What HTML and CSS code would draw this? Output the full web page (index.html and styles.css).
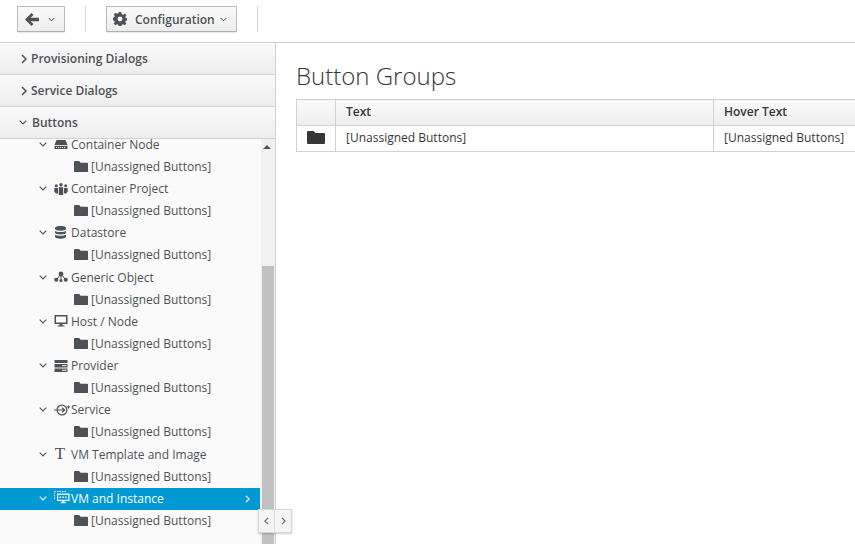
FILE: index.html
```html
<!DOCTYPE html>
<html lang="en">
<head>
  <meta charset="UTF-8" />
  <meta name="viewport" content="width=device-width, initial-scale=1" />
  <title>Button Groups</title>
  <link rel="stylesheet" href="styles.css">
</head>
<body>

  <svg class="defs" width="0" height="0">
    <symbol id="folder" viewBox="0 0 16 13" preserveAspectRatio="none"><path d="M0 1.200Q0 0 1.200 0H6L7.500 2H15Q16 2 16 3V12Q16 13 15 13H1Q0 13 0 12Z"/></symbol>
    <symbol id="down" viewBox="0 0 8 5"><path d="M.7.7 4 4 7.300.7" fill="none" stroke="currentColor" stroke-width="1.100"/></symbol>
    <symbol id="right" viewBox="0 0 6 10"><path d="M1 1 5 5 1 9" fill="none" stroke="currentColor" stroke-width="1.500"/></symbol>
  </svg>

  <div class="toolbar">
    <button class="tool-btn back-btn">
      <svg class="back-icon" viewBox="0 0 14 13"><path d="M6.500 0 8.500 2 5.500 4.700H14V8.300H5.500L8.500 11 6.500 13 0 6.500Z"/></svg>
      <svg class="caret"><use href="#down"/></svg>
    </button>
    <span class="tool-sep"></span>
    <button class="tool-btn config-btn">
      <svg class="gear" viewBox="0 0 14 14"><path fill-rule="evenodd" d="M5.700 0H8.300L8.700 2 10.300 2.700 12 1.600 13.400 3.400 12.300 4.900 12.800 6 14 6.300V8.300L12.800 8.700 12.300 10 13.300 11.600 11.700 13.200 10.200 12.200 8.800 12.800 8.300 14H5.700L5.300 12.700 3.900 12.200 2.400 13.300.7 11.600 1.800 10 1.200 8.700 0 8.300V5.700L1.200 5.300 1.800 3.900.8 2.400 2.400.8 3.900 1.800 5.300 1.200ZM7 4.600A2.400 2.400 0 1 0 7 9.400 2.400 2.400 0 1 0 7 4.600Z"/></svg>
      <span>Configuration</span>
      <svg class="caret"><use href="#down"/></svg>
    </button>
    <span class="tool-sep"></span>
  </div>

  <div class="main">
    <div class="sidebar">
      <div class="acc-head"><svg class="acc-right"><use href="#right"/></svg>Provisioning Dialogs</div>
      <div class="acc-head"><svg class="acc-right"><use href="#right"/></svg>Service Dialogs</div>
      <div class="acc-head"><svg class="acc-down"><use href="#down"/></svg>Buttons</div>

      <div class="tree-wrap">
        <div class="tree">
          <div class="node">
            <svg class="toggle"><use href="#down"/></svg>
            <svg class="icon" viewBox="0 0 14 12"><path d="M2.500 2H11.500L13.500 7H.5Z"/><path d="M.5 7.800H13.500V11H.5Z"/><path d="M2 9.500H12" stroke="#fafafa" stroke-dasharray="1 1"/></svg>
            <span class="label">Container Node</span>
          </div>
          <div class="leaf"><svg class="folder"><use href="#folder"/></svg><span>[Unassigned Buttons]</span></div>

          <div class="node">
            <svg class="toggle"><use href="#down"/></svg>
            <svg class="icon" viewBox="0 0 14 12"><circle cx="7" cy="1.700" r="1.700"/><path d="M4.800 4.200H9.200V12H4.800Z"/><circle cx="2.300" cy="2.700" r="1.500"/><path d="M.3 5H4V10.500H1.800L.3 8.500Z"/><circle cx="11.700" cy="2.700" r="1.500"/><path d="M10 5H13.700V8.500L12.200 10.500H10Z"/></svg>
            <span class="label">Container Project</span>
          </div>
          <div class="leaf"><svg class="folder"><use href="#folder"/></svg><span>[Unassigned Buttons]</span></div>

          <div class="node">
            <svg class="toggle"><use href="#down"/></svg>
            <svg class="icon icon-tall" viewBox="0 0 14 13"><path d="M1 2C1 -.6 12 -.6 12 2V3C12 5.300 1 5.300 1 3Z"/><path d="M1 4.900C3 6.400 10 6.400 12 4.900V6.800C12 9 1 9 1 6.800Z"/><path d="M1 8.700C3 10.200 10 10.200 12 8.700V10.500C12 13.400 1 13.400 1 10.500Z"/></svg>
            <span class="label">Datastore</span>
          </div>
          <div class="leaf"><svg class="folder"><use href="#folder"/></svg><span>[Unassigned Buttons]</span></div>

          <div class="node">
            <svg class="toggle"><use href="#down"/></svg>
            <svg class="icon" viewBox="0 0 14 12"><path d="M7 3 2.500 8.500M7 3 11.500 8.500M7 3V9.500" stroke="#4d5258" fill="none"/><circle cx="7" cy="3" r="2.400"/><circle cx="2.200" cy="8.700" r="2"/><circle cx="11.800" cy="8.700" r="2"/><circle cx="7" cy="9.500" r="1.500"/></svg>
            <span class="label">Generic Object</span>
          </div>
          <div class="leaf"><svg class="folder"><use href="#folder"/></svg><span>[Unassigned Buttons]</span></div>

          <div class="node">
            <svg class="toggle"><use href="#down"/></svg>
            <svg class="icon" viewBox="0 0 14 12"><path fill-rule="evenodd" d="M.5 0H13.500V9H.5ZM2 1.500V7.500H12V1.500Z"/><path d="M5.500 9H8.500V10.500H10.500V11.500H3.500V10.500H5.500Z"/></svg>
            <span class="label">Host / Node</span>
          </div>
          <div class="leaf"><svg class="folder"><use href="#folder"/></svg><span>[Unassigned Buttons]</span></div>

          <div class="node">
            <svg class="toggle"><use href="#down"/></svg>
            <svg class="icon" viewBox="0 0 14 12"><path d="M.5 0H13.500V3H.5Z"/><path d="M.5 4H13.500V7.500H.5Z"/><path d="M.5 8.500H13.500V12H.5Z"/><path d="M8 5.700H12.500M8 10.200H12.500" stroke="#fafafa"/></svg>
            <span class="label">Provider</span>
          </div>
          <div class="leaf"><svg class="folder"><use href="#folder"/></svg><span>[Unassigned Buttons]</span></div>

          <div class="node">
            <svg class="toggle"><use href="#down"/></svg>
            <svg class="icon icon-wide" viewBox="0 0 17 12"><circle cx="8" cy="6" r="4.900" fill="none" stroke="#4d5258" stroke-width="1.200"/><path d="M0 6H10.500M8 3.800 10.700 6 8 8.200" fill="none" stroke="#4d5258" stroke-width="1.200"/><path d="M14 1.500H15V2.500H16V3.500H15V4.500H14V3.500H13V2.500H14Z"/></svg>
            <span class="label">Service</span>
          </div>
          <div class="leaf"><svg class="folder"><use href="#folder"/></svg><span>[Unassigned Buttons]</span></div>

          <div class="node">
            <svg class="toggle"><use href="#down"/></svg>
            <span class="icon-t">T</span>
            <span class="label">VM Template and Image</span>
          </div>
          <div class="leaf"><svg class="folder"><use href="#folder"/></svg><span>[Unassigned Buttons]</span></div>

          <div class="node selected">
            <svg class="toggle"><use href="#down"/></svg>
            <svg class="icon icon-white" viewBox="0 0 16 13"><path d="M.5 8V.5H13" fill="none" stroke="#fff" stroke-dasharray="1.500 1"/><path fill-rule="evenodd" d="M3 2.500H15.500V10H3ZM4.200 3.700V8.800H14.300V3.700Z"/><path d="M5.500 5.500H7V7H5.500ZM8.300 5.500H9.800V7H8.300ZM11 5.500H12.500V7H11Z"/><path d="M8 10H10.500V11.300H12V12.300H6.500V11.300H8Z"/></svg>
            <span class="label">VM and Instance</span>
            <svg class="row-arrow"><use href="#right"/></svg>
          </div>
          <div class="leaf"><svg class="folder"><use href="#folder"/></svg><span>[Unassigned Buttons]</span></div>
        </div>

        <div class="scrollbar">
          <span class="scroll-up"></span>
          <span class="scroll-thumb"></span>
        </div>
      </div>

      <div class="collapse-btns">
        <span class="collapse-btn"><svg><use href="#right"/></svg></span>
        <span class="collapse-btn"><svg><use href="#right"/></svg></span>
      </div>
    </div>

    <div class="content">
      <h1>Button Groups</h1>
      <table class="groups">
        <tr>
          <th class="col-icon"></th>
          <th class="col-text">Text</th>
          <th>Hover Text</th>
        </tr>
        <tr>
          <td class="col-icon"><svg class="table-folder"><use href="#folder"/></svg></td>
          <td>[Unassigned Buttons]</td>
          <td>[Unassigned Buttons]</td>
        </tr>
      </table>
    </div>
  </div>

</body>
</html>
```

FILE: styles.css
```css
html, body { height: 100%; }
body {
  margin: 0;
  font-family: "Open Sans", sans-serif;
  font-size: 12px;
  color: #363636;
  background: #fff;
  overflow: hidden;
}
.defs { position: absolute; }

.toolbar {
  height: 42px;
  box-sizing: border-box;
  display: flex;
  align-items: flex-start;
  padding: 6px 0 0 17px;
}
.tool-btn {
  height: 26px;
  box-sizing: border-box;
  display: flex;
  align-items: center;
  padding: 0;
  border: 1px solid #bbb;
  border-bottom-color: #b0b0b0;
  border-radius: 1px;
  background: linear-gradient(#fafafa, #ededed);
  box-shadow: 0 1px 1px rgba(3,3,3,0.1);
  font-family: inherit;
  font-size: 12px;
  font-weight: 600;
  color: #4d5258;
}
.back-btn { width: 48px; padding-left: 7px; }
.config-btn { width: 131px; padding-left: 6px; }
.back-icon { width: 14px; height: 13px; fill: #4d5258; }
.back-btn .caret { margin-left: 9px; }
.gear { width: 14px; height: 14px; fill: #4d5258; margin-right: 8px; }
.config-btn .caret { margin-left: 5px; }
.caret { width: 7px; height: 5px; color: #4d5258; }
.tool-sep {
  width: 1px;
  height: 26px;
  background: #d6d6d6;
  margin: 0 20px;
}

.main {
  display: flex;
  height: 502px;
  border-top: 1px solid #d1d1d1;
}
.sidebar {
  position: relative;
  width: 275px;
  flex: none;
  border-right: 1px solid #d1d1d1;
  background: #fafafa;
}
.acc-head {
  height: 32px;
  box-sizing: border-box;
  border-bottom: 1px solid #d1d1d1;
  background: linear-gradient(#fafafa, #ededed);
  display: flex;
  align-items: center;
  padding-left: 18px;
  font-weight: 600;
  color: #4d5258;
}
.acc-right { width: 6px; height: 10px; margin: 0 4px 0 3px; color: #4d5258; }
.acc-down { width: 8px; height: 5px; margin: 0 5px 0 1px; color: #4d5258; }

.tree-wrap {
  display: flex;
  height: 405px;
  overflow: hidden;
}
.tree {
  width: 260px;
  flex: none;
  margin-top: -5.78px;
}
.node, .leaf {
  height: 22.125px;
  display: flex;
  align-items: center;
  color: #4d5258;
  white-space: nowrap;
}
.node { padding-left: 39px; }
.leaf { padding-left: 74px; }
.toggle { width: 8px; height: 5px; flex: none; color: #4d5258; margin-right: 7px; }
.icon { width: 14px; height: 12px; flex: none; fill: #4d5258; margin-right: 3px; }
.icon-tall { height: 13px; }
.icon-wide { width: 17px; margin-right: 0; }
.icon-t {
  width: 12px;
  flex: none;
  margin-right: 5px;
  text-align: center;
  font-family: "Liberation Serif", serif;
  font-size: 17px;
  line-height: 14px;
}
.folder { width: 14px; height: 11px; flex: none; fill: #4d5258; margin-right: 3px; }
.selected {
  background: #0099d3;
  color: #fff;
  position: relative;
  box-shadow: inset 0 1px 0 #fafafa, 0 1px 0 #0099d3;
}
.selected .toggle { color: #fff; }
.icon-white { fill: #fff; width: 16px; height: 13px; margin-right: 1px; margin-top: -2px; }
.row-arrow {
  position: absolute;
  right: 10px;
  top: 8px;
  width: 5px;
  height: 8px;
  color: #fff;
}

.scrollbar {
  position: relative;
  width: 14px;
  margin-left: 1px;
  background: #f1f1f1;
}
.scroll-up {
  position: absolute;
  left: 2px;
  top: 6px;
  border: 4px solid transparent;
  border-top: 0;
  border-bottom: 4px solid #505050;
}
.scroll-thumb {
  position: absolute;
  left: 1px;
  right: 1px;
  top: 127px;
  bottom: 0;
  background: #c1c1c1;
}

.collapse-btns {
  position: absolute;
  left: 258px;
  top: 466px;
  display: flex;
  height: 24px;
  background: #f5f5f5;
  box-shadow: 0 1px 2px rgba(3,3,3,0.2);
}
.collapse-btn {
  width: 17px;
  box-sizing: border-box;
  border: 1px solid #d8d8d8;
  display: flex;
  align-items: center;
  justify-content: center;
  color: #6a6e73;
}
.collapse-btn + .collapse-btn { border-left: 0; }
.collapse-btn svg { width: 5px; height: 8px; }
.collapse-btn:first-child svg { transform: scaleX(-1); }

.content {
  flex: 1;
  min-width: 0;
  padding-left: 20px;
  overflow: hidden;
}
h1 {
  margin: 16px 0 7px;
  font-size: 24px;
  font-weight: 300;
  line-height: 33px;
  color: #363636;
  white-space: nowrap;
}
.groups {
  width: 600px;
  border-collapse: collapse;
  table-layout: fixed;
}
.groups th, .groups td {
  height: 26px;
  box-sizing: border-box;
  padding: 0 10px 2px;
  border: 1px solid #d1d1d1;
  text-align: left;
  white-space: nowrap;
}
.groups th {
  background: linear-gradient(#fafafa, #ededed);
  font-weight: 600;
  color: #363636;
}
.groups td { color: #363636; }
.col-icon { width: 39px; padding: 0 0 2px !important; }
.col-text { width: 378px; }
.table-folder { width: 18px; height: 13px; fill: #363636; display: block; margin-left: 10px; }
```
